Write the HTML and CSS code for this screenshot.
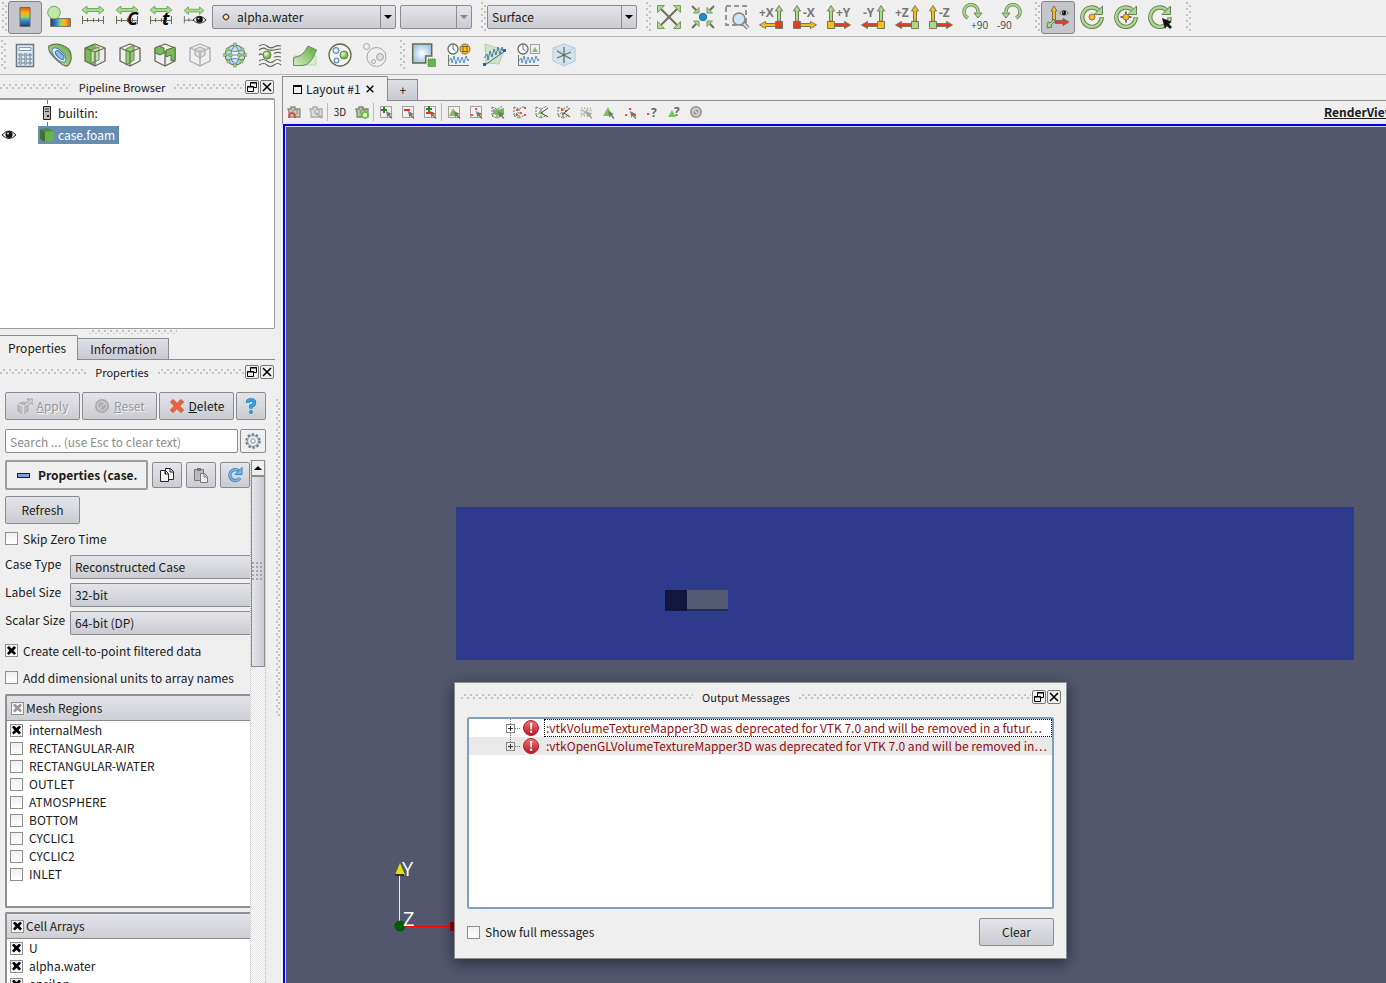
FILE: index.html
```
<!DOCTYPE html>
<html lang="en">
<head>
    <meta charset="UTF-8">
    <meta name="viewport" content="width=device-width, initial-scale=1.0">
    <title>ParaView</title>
    <link rel="stylesheet" href="styles.css">
</head>
<body>
    <!-- Shared icon shapes -->
    <svg class="defs" aria-hidden="true">
        <defs>
            <linearGradient id="rainbow" x1="0" y1="0" x2="0" y2="1">
                <stop offset="0" stop-color="#e8590c"/><stop offset=".3" stop-color="#fcb813"/><stop offset=".5" stop-color="#9ccf6a"/><stop offset=".7" stop-color="#1f8fd0"/><stop offset="1" stop-color="#3b2a8c"/>
            </linearGradient>
            <linearGradient id="rainbowH">
                <stop offset="0" stop-color="#3b2a8c"/><stop offset=".3" stop-color="#1f8fd0"/><stop offset=".5" stop-color="#9ccf6a"/><stop offset=".7" stop-color="#fcb813"/><stop offset="1" stop-color="#e8590c"/>
            </linearGradient>
            <radialGradient id="ball" cx=".35" cy=".35"><stop offset="0" stop-color="#f2faee"/><stop offset="1" stop-color="#74bb50"/></radialGradient>
            <radialGradient id="sky"><stop offset="0" stop-color="#fff"/><stop offset="1" stop-color="#a3cbea"/></radialGradient>
            <linearGradient id="leaf" x1="0" y1="1" x2="1" y2="0"><stop offset="0" stop-color="#d4ecc6"/><stop offset="1" stop-color="#5daa38"/></linearGradient>
            <linearGradient id="danger" x1="0" y1="0" x2="0" y2="1"><stop offset="0" stop-color="#f0786a"/><stop offset="1" stop-color="#b8142c"/></linearGradient>
            <symbol id="up" viewBox="0 0 24 24"><path d="M20 .5l3.500 5.500h-2v10h-3V6h-2z"/></symbol>
            <symbol id="side" viewBox="0 0 24 24"><path d="M.5 20l6-3.500v2h10v3h-10v2z"/></symbol>
            <symbol id="box" viewBox="0 0 24 24"><path d="M16.500 16.500h7v7h-7z"/></symbol>
            <symbol id="rule" viewBox="0 0 24 24">
                <path d="M1 5l5-4v2.500h12V1l5 4-5 4V6.500H6V9z" fill="#a5dc87" stroke="#79a765"/>
                <path d="M1 15.500h22M1.500 11v8M6.500 13v4M12.500 13v4M17.500 13v4M22.500 11v8" fill="none" stroke="#6d6d5c"/>
            </symbol>
            <symbol id="cube" viewBox="0 0 24 24"><path d="M12 1l10 4v13l-10 5-10-5V5zM2 5l10 4 10-4M12 9v14" fill="none" stroke-linejoin="round"/></symbol>
            <symbol id="spin" viewBox="0 0 24 24"><path d="M18.500 5A9.700 9.700 0 1 0 21.700 12" fill="none" stroke="#6e7a5c" stroke-width="4.300"/><path d="M18.500 5A9.700 9.700 0 1 0 21.600 12.500" fill="none" stroke="#a5dc87" stroke-width="2.500"/><path d="M22.500 1v8.500H14z" fill="#a5dc87" stroke="#6e7a5c"/></symbol>
            <symbol id="clock" viewBox="0 0 12 12"><circle cx="6" cy="6" r="5" fill="#fff" stroke="#6d6d5c" stroke-width="1.300"/><path d="M6 2v4l2.500 2" fill="none" stroke="#2b74b8"/></symbol>
            <symbol id="wave" viewBox="0 0 24 12"><path d="M1.500 0v10.500H22" fill="none" stroke="#777766"/><path d="M2 6l2-3 1 5 2-7 2 8 2-7 2 6 2-6 2 6 2-7 2 5 1-2" fill="none" stroke="#2c7fc4" stroke-width=".8"/></symbol>
            <symbol id="marquee" viewBox="0 0 14 14"><path d="M1.500 1.500h11v11h-11z" fill="none" stroke="#555" stroke-dasharray="1 1"/></symbol>
            <symbol id="pick" viewBox="0 0 14 14"><path d="M7 6l6 3-2.300.7L13.500 13l-1 1-3-3.300L8.500 13z" fill="#77776a"/></symbol>
            <symbol id="frustum" viewBox="0 0 14 14"><path d="M1 2l5 2 6-3M1 2v9l5 2M6 4v9l6-3M1 11l4-4" fill="none" stroke="#6c7764" stroke-dasharray="2 1"/></symbol>
            <symbol id="camera" viewBox="0 0 14 14"><path d="M1 4h3V2h4v2h5v8H2V7z" stroke-width="1.300"/><circle cx="8" cy="7" r="2.500" fill="none"/></symbol>
            <symbol id="float" viewBox="0 0 12 12"><path d="M4.500 1.500h6v5h-6zM4 2h7" fill="none" stroke="#000"/><path d="M1.500 5.500h6v5h-6zM1 6h7" fill="#eee" stroke="#000"/></symbol>
            <symbol id="close" viewBox="0 0 12 12"><path d="M2 2l8 8M10 2l-8 8" stroke="#000" stroke-width="1.600"/></symbol>
            <symbol id="eye" viewBox="0 0 16 12"><path d="M1 6q7-8 14 0-7 7-14 0z" fill="#eee" stroke="#222"/><circle cx="8" cy="5.500" r="3.500" fill="#111"/><circle cx="7" cy="4.500" r="1" fill="#ddd"/></symbol>
            <symbol id="error" viewBox="0 0 16 16"><circle cx="8" cy="8" r="7.500" fill="url(#danger)" stroke="#b3202c"/><path d="M7 3h2.300l-.5 6.500H7.500z" fill="#fff"/><circle cx="8.100" cy="11.800" r="1.200" fill="#fff"/></symbol>
        </defs>
    </svg>

    <!-- Colouring, representation and camera toolbar -->
    <header class="toolbar color-bar">
        <i class="grip"></i>
        <button class="tool active" aria-label="Color legend"><svg viewBox="0 0 24 24"><path d="M7 2.500h10v19H7z" fill="url(#rainbow)" stroke="#6b6b60"/></svg></button>
        <button class="tool" aria-label="Edit color map"><svg viewBox="0 0 24 24"><path d="M3.500 13.500h20v8h-20z" fill="url(#rainbowH)" stroke="#77776c"/><circle cx="7" cy="7.500" r="6.300" fill="#bfe8a8" stroke="#79a765"/></svg></button>
        <button class="tool" aria-label="Rescale to data range"><svg viewBox="0 0 24 24"><use href="#rule" width="24" height="24"/></svg></button>
        <button class="tool" aria-label="Rescale to custom range"><svg viewBox="0 0 24 24"><use href="#rule" width="24" height="24"/><text x="12" y="20" class="mark">C</text></svg></button>
        <button class="tool" aria-label="Rescale over time"><svg viewBox="0 0 24 24"><use href="#rule" width="24" height="24"/><text x="13" y="20" class="mark">t</text></svg></button>
        <button class="tool" aria-label="Rescale to visible range"><svg viewBox="0 0 24 24"><use href="#rule" width="22" height="24"/><path d="M10 10h14v10H10z" fill="#efefef"/><use href="#eye" x="9" y="9" width="15" height="12"/></svg></button>
        <div class="combo array">
            <i class="point"></i>
            <select aria-label="Color by"><option>alpha.water</option></select>
        </div>
        <div class="combo component off"><select aria-label="Component" disabled><option></option></select></div>
        <i class="grip spaced"></i>
        <div class="combo representation"><select aria-label="Representation"><option>Surface</option></select></div>
        <i class="grip spaced"></i>
        <button class="tool" aria-label="Reset camera"><svg viewBox="0 0 24 24"><path d="M4 4l16 16M20 4L4 20" stroke="#6e7358" stroke-width="2"/><path d="M.5.500h7l-7 7zM23.500.500h-7l7 7zM.5 23.500h7l-7-7zM23.500 23.500h-7l7-7z" fill="#a5dc87" stroke="#7a9a66"/></svg></button>
        <button class="tool" aria-label="Zoom to data"><svg viewBox="0 0 24 24"><path d="M1 1l5 5M23 1l-5 5M1 23l5-5M23 23l-5-5" stroke="#6e7358" stroke-width="2"/><path d="M8 8H2.500L8 2.500zM16 8h5.500L16 2.500zM8 16H2.500L8 21.500zM16 16h5.500L16 21.500z" fill="#a5dc87" stroke="#7a9a66"/><circle cx="12" cy="12" r="3.700" fill="#1b8ed0" stroke="#356f98"/></svg></button>
        <button class="tool" aria-label="Zoom to box"><svg viewBox="0 0 24 24"><path d="M1 1h20v19H1z" fill="none" stroke="#77776c" stroke-width="1.500" stroke-dasharray="5 3"/><path d="M18 18l5 5" stroke="#777" stroke-width="4"/><path d="M18 18l5 5" stroke="#cde3f4" stroke-width="2"/><circle cx="14" cy="14" r="6" fill="#cbe6f8" stroke="#858585" stroke-width="1.500"/></svg></button>
        <button class="tool" aria-label="+X"><svg class="axis" viewBox="0 0 24 24"><use href="#up" fill="#a5dc87"/><use href="#side" fill="#fdbb14"/><use href="#box" fill="#e23b26"/><text x="0" y="12">+X</text></svg></button>
        <button class="tool" aria-label="-X"><svg class="axis" viewBox="0 0 24 24"><g transform="matrix(-1 0 0 1 24 0)"><use href="#up" fill="#a5dc87"/><use href="#side" fill="#fdbb14"/><use href="#box" fill="#e23b26"/></g><text x="10" y="12">-X</text></svg></button>
        <button class="tool" aria-label="+Y"><svg class="axis" viewBox="0 0 24 24"><g transform="matrix(-1 0 0 1 24 0)"><use href="#up" fill="#a5dc87"/><use href="#side" fill="#e23b26"/><use href="#box" fill="#fdbb14"/></g><text x="9" y="12">+Y</text></svg></button>
        <button class="tool" aria-label="-Y"><svg class="axis" viewBox="0 0 24 24"><use href="#up" fill="#a5dc87"/><use href="#side" fill="#e23b26"/><use href="#box" fill="#fdbb14"/><text x="2" y="12">-Y</text></svg></button>
        <button class="tool" aria-label="+Z"><svg class="axis" viewBox="0 0 24 24"><use href="#up" fill="#fdbb14"/><use href="#side" fill="#e23b26"/><use href="#box" fill="#a5dc87"/><text x="0" y="12">+Z</text></svg></button>
        <button class="tool" aria-label="-Z"><svg class="axis" viewBox="0 0 24 24"><g transform="matrix(-1 0 0 1 24 0)"><use href="#up" fill="#fdbb14"/><use href="#side" fill="#e23b26"/><use href="#box" fill="#a5dc87"/></g><text x="10" y="12">-Z</text></svg></button>
        <button class="tool" aria-label="Rotate +90"><svg viewBox="0 0 24 24" class="turn"><path d="M5 13A7 7 0 1 1 15 7" fill="none" stroke="#6e7a5c" stroke-width="3.500"/><path d="M5 13A7 7 0 1 1 15 7" fill="none" stroke="#a5dc87" stroke-width="2"/><path d="M11 8h8l-4 5z" fill="#a5dc87" stroke="#6e7a5c"/><text x="8" y="24">+90</text></svg></button>
        <button class="tool" aria-label="Rotate -90"><svg viewBox="0 0 24 24" class="turn"><path d="M19 13A7 7 0 1 0 9 7" fill="none" stroke="#6e7a5c" stroke-width="3.500"/><path d="M19 13A7 7 0 1 0 9 7" fill="none" stroke="#a5dc87" stroke-width="2"/><path d="M13 8H5l4 5z" fill="#a5dc87" stroke="#6e7a5c"/><text x="0" y="24">-90</text></svg></button>
        <i class="grip spaced"></i>
        <button class="tool active" aria-label="Show orientation axes"><svg viewBox="0 0 24 24"><path d="M8 1l3 5H9.500v10h-3V6H5z" fill="#fdbb14" stroke="#77705c"/><path d="M9 15.500h8v-2l6 3.500-6 3.500v-2H9z" fill="#e23b26" stroke="#77705c"/><path d="M9 16l-4 4 1 2-5 1 1-6 2 1 4-4z" fill="#a5dc87" stroke="#6e7a5c"/><use href="#eye" x="13" y="4" width="10" height="8"/></svg></button>
        <button class="tool" aria-label="Show center"><svg viewBox="0 0 24 24"><use href="#spin" width="24" height="24"/><circle cx="12" cy="12" r="3" fill="#fdbb14" stroke="#8b7b45"/></svg></button>
        <button class="tool" aria-label="Reset center"><svg viewBox="0 0 24 24"><use href="#spin" width="24" height="24"/><path d="M12 6.500v11M6.500 12h11" stroke="#77705c" stroke-width="2"/><circle cx="12" cy="12" r="3" fill="#fdbb14" stroke="#8b7b45"/></svg></button>
        <button class="tool" aria-label="Pick center"><svg viewBox="0 0 24 24"><use href="#spin" width="24" height="24"/><path d="M14 13l10 4-3.500 1.500L24 22l-2 2-3.500-3.500L17 24z" fill="#111"/></svg></button>
        <i class="grip spaced"></i>
    </header>

    <!-- Filters toolbar -->
    <div class="toolbar filter-bar">
        <i class="grip"></i>
        <button class="tool" aria-label="Calculator"><svg viewBox="0 0 24 24"><path d="M3.500 1.500h17v22h-17z" fill="#dcecf8" stroke="#6d7780" stroke-width="1.500"/><path d="M6 4.500h12v3H6z" fill="#fff" stroke="#779cb8"/><path d="M6 11h3v2H6zm5 0h3v2h-3zm5 0h2v2h-2zM6 15h3v2H6zm5 0h3v2h-3zm5 0h2v2h-2zM6 19h3v2H6zm5 0h3v2h-3zm5 0h2v2h-2z" fill="#fff" stroke="#64788a"/></svg></button>
        <button class="tool" aria-label="Contour"><svg viewBox="0 0 24 24"><path d="M1 3C8-1 22 2 23 12c1 6-2 11-5 11S-2 10 1 3z" fill="url(#leaf)" stroke="#677750" stroke-width="1.300"/><ellipse cx="11" cy="12" rx="4.500" ry="9" transform="rotate(-43 11 12)" fill="#d9edf8" stroke="#5684a8"/><ellipse cx="11.500" cy="12.500" rx="2.500" ry="5.500" transform="rotate(-43 11 12)" fill="#8abde5" stroke="#426f9a"/></svg></button>
        <button class="tool" aria-label="Clip"><svg viewBox="0 0 24 24"><path d="M2 5l8-4 4 2-3 6v14l-9-5z" fill="#77bb55"/><path d="M8 7l8-3v13l-8 3z" fill="#bce2a8" stroke="#6e8060"/><use href="#cube" width="24" height="24" stroke="#68684e" stroke-width="1.300"/></svg></button>
        <button class="tool" aria-label="Slice"><svg viewBox="0 0 24 24"><path d="M8 6l8-4v15l-8 5z" fill="#92cc74" stroke="#5c9340"/><use href="#cube" width="24" height="24" stroke="#68684e" stroke-width="1.300"/></svg></button>
        <button class="tool" aria-label="Threshold"><svg viewBox="0 0 24 24"><use href="#cube" width="24" height="24" stroke="#68684e" stroke-width="1.300"/><path d="M2 5l4-2 5 2v5l-4 2-5-2zM13 7l9-3v13l-4 1v-6l-5 2z" fill="#79bd5a" stroke="#5b703f"/></svg></button>
        <button class="tool" aria-label="Extract subset"><svg viewBox="0 0 24 24"><path d="M7 6l5-2 5 2v6l-5 3-5-3z" fill="#ddd" stroke="#aaa"/><use href="#cube" width="24" height="24" stroke="#aaa" stroke-width="1.300"/></svg></button>
        <button class="tool" aria-label="Glyph"><svg viewBox="0 0 24 24"><circle cx="12" cy="12" r="10" fill="url(#sky)" stroke="#68684e"/><path d="M2 12h20M4 7q8 3 16 0M4 17q8-3 16 0M12 2q-9 10 0 20M12 2q9 10 0 20" fill="none" stroke="#65859c"/><path d="M10.500 0h3v3h-3zM10.500 21h3v3h-3zM.5 10.500h3v3h-3zM20.500 10.500h3v3h-3zM6 10.500h3v3H6zM15 10.500h3v3h-3zM3 5h3v3H3zM18 5h3v3h-3zM4 17h3v3H4zM17 17h3v3h-3z" fill="#99ce77" stroke="#6d9150" stroke-width=".5"/></svg></button>
        <button class="tool" aria-label="Stream tracer"><svg viewBox="0 0 24 24"><path d="M1 3q5-3 8 0t7 1 7-1M1 7q4-3 7-1 4 2 8 1t7-1M16 10.500q4-2 7-.5M16 14q3-1 7 0M1 12q2-2 4 0M1 18q4-3 8 0t7 0 7 0M1 22q5-3 8 0t7 0 7 0" fill="none" stroke="#66664e" stroke-width="1.200"/><circle cx="9" cy="12" r="4" fill="url(#ball)" stroke="#57823f"/></svg></button>
        <button class="tool" aria-label="Warp by vector"><svg viewBox="0 0 24 24"><path d="M1 13h22v9H1z" fill="#d7edcb" stroke="#bcd9ad"/><path d="M.5 14.500Q10 14 15 3l8.500 4Q18 22 10 22.500H.5z" fill="url(#leaf)" stroke="#6d8a5a"/></svg></button>
        <button class="tool" aria-label="Group datasets"><svg viewBox="0 0 24 24"><circle cx="12" cy="12" r="11" fill="#f4f4f0" stroke="#68684e" stroke-width="1.300"/><circle cx="8" cy="7.500" r="3" fill="url(#sky)" stroke="#477da5"/><circle cx="16" cy="12" r="4" fill="url(#ball)" stroke="#57823f"/><circle cx="8.500" cy="17.500" r="2.500" fill="url(#sky)" stroke="#477da5"/></svg></button>
        <button class="tool" aria-label="Extract level"><svg viewBox="0 0 24 24" fill="#eee" stroke="#a5a5a5"><circle cx="13.500" cy="14" r="9.500"/><circle cx="3.500" cy="3.500" r="3"/><circle cx="17" cy="14" r="3.500" fill="#ddd"/><circle cx="10.500" cy="18.500" r="2"/></svg></button>
        <i class="grip spaced"></i>
        <button class="tool" aria-label="Extract selection"><svg viewBox="0 0 24 24"><path d="M.7 1h19v12h-6v7h-13z" fill="url(#sky)" stroke="#68684e" stroke-width="1.500"/><path d="M16 16h7.500v7.500H16z" fill="#65b64c" stroke="#48752f" stroke-dasharray="1 1"/></svg></button>
        <button class="tool" aria-label="Plot global variables"><svg viewBox="0 0 24 24"><use href="#clock" width="12" height="12"/><circle cx="18" cy="6" r="5" fill="#fcc02a" stroke="#6d6d5c"/><path d="M15 3.500h6M15 8.500h6M16 4v4M20 4v4" stroke="#806213"/><use href="#wave" y="12" width="24" height="12"/></svg></button>
        <button class="tool" aria-label="Plot over line"><svg viewBox="0 0 24 24"><path d="M3 1l19 6-5 14L4 20z" fill="#cfe3c6" stroke="#b4cda7"/><path d="M3 22L23 8" stroke="#476a80"/><path d="M2 15l3-4 1 6 2-9 2 6 2-8 2 6 2-8 2 7 2-7 1 4" fill="none" stroke="#236aa6" stroke-width=".8"/><path d="M1 20h3v3H1zM21 6h3v3h-3z" fill="#1d64b3"/></svg></button>
        <button class="tool" aria-label="Plot selection over time"><svg viewBox="0 0 24 24"><use href="#clock" width="12" height="12"/><path d="M13.500 1.500h9v9h-9z" fill="none" stroke="#555" stroke-dasharray="1 1"/><path d="M18 4l3 5h-6z" fill="#81c35e"/><use href="#wave" y="12" width="24" height="12"/></svg></button>
        <button class="tool" aria-label="Probe location"><svg viewBox="0 0 24 24"><path d="M12 1l11 4v13l-11 5-11-5V5z" fill="#d3e4ef" stroke="#b1cada"/><path d="M1 5l11 4 11-4M12 9v14" fill="none" stroke="#b9d0df"/><path d="M12 4v16M5 8l14 8M5 15l14-6" stroke="#6b6f65" stroke-width="1.300"/></svg></button>
    </div>

    <div class="workspace">
        <aside class="docks">
            <!-- Pipeline browser -->
            <section class="dock">
                <div class="dock-title"><i class="ridge"></i><h2>Pipeline Browser</h2><i class="ridge"></i>
                    <button aria-label="Float"><svg viewBox="0 0 12 12"><use href="#float"/></svg></button>
                    <button aria-label="Close"><svg viewBox="0 0 12 12"><use href="#close"/></svg></button>
                </div>
                <ul class="pipeline">
                    <li><span class="vis"></span><span class="node"><svg viewBox="0 0 16 16"><path d="M4.500 1.500h7v13h-7z" fill="#bbb" stroke="#222"/><path d="M6 4h4M6 6.500h4" stroke="#333"/><path d="M8 10h2v2H8z" fill="#222"/></svg>builtin:</span></li>
                    <li><span class="vis"><svg viewBox="0 0 16 12"><use href="#eye"/></svg></span><span class="node selected"><svg viewBox="0 0 16 16"><path d="M1 2l5 3v10l-5-3z" fill="#3f7330"/><path d="M1 2l8-1 6 3-9 1z" fill="#568747"/><path d="M6 5l9-1v10l-9 1z" fill="#6ab04c"/></svg>case.foam</span></li>
                </ul>
            </section>
            <i class="ridge handle"></i>

            <!-- Properties -->
            <nav class="tabs side-tabs">
                <button class="tab current">Properties</button>
                <button class="tab">Information</button>
            </nav>
            <section class="dock properties">
                <div class="dock-title"><i class="ridge"></i><h2>Properties</h2><i class="ridge"></i>
                    <button aria-label="Float"><svg viewBox="0 0 12 12"><use href="#float"/></svg></button>
                    <button aria-label="Close"><svg viewBox="0 0 12 12"><use href="#close"/></svg></button>
                </div>
                <div class="actions">
                    <button class="push" disabled><svg viewBox="0 0 16 16"><path d="M1 6l5-2 5 2v7l-5 3-5-3z" fill="#bbb" stroke="#aaa"/><path d="M1 6l5 2 5-2M6 8v8" fill="none" stroke="#eee"/><path d="M7 6l5-4-2-1h6v6l-2-2-4 4z" fill="#ccc" stroke="#aaa"/></svg><span><u>A</u>pply</span></button>
                    <button class="push" disabled><svg viewBox="0 0 16 16"><circle cx="8" cy="8" r="7" fill="#aaa"/><circle cx="8" cy="8" r="4.500" fill="none" stroke="#ccc" stroke-width="1.500"/><path d="M5 11l6-6" stroke="#ccc" stroke-width="1.500"/></svg><span><u>R</u>eset</span></button>
                    <button class="push"><svg viewBox="0 0 16 16"><path d="M4 1.500l4 4 4-4 2.500 2.500-4 4 4 4-2.500 2.500-4-4-4 4L1.500 12l4-4-4-4z" fill="#f4623d" stroke="#c54d31"/></svg><span><u>D</u>elete</span></button>
                    <button class="push small" aria-label="Help"><svg viewBox="0 0 16 16"><path d="M4.500 5Q4.500 2 8 2t3.500 3Q11.500 7 8 8v2.500" fill="none" stroke="#216ca3" stroke-width="3.500"/><path d="M4.500 5Q4.500 2 8 2t3.500 3Q11.500 7 8 8v2.500" fill="none" stroke="#36a1e4" stroke-width="2.500"/><circle cx="8" cy="14" r="1.700" fill="#36a1e4" stroke="#216ca3" stroke-width=".5"/></svg></button>
                </div>
                <div class="search">
                    <input type="text" placeholder="Search ... (use Esc to clear text)" aria-label="Search">
                    <button class="push" aria-label="Advanced"><svg viewBox="0 0 16 16"><circle cx="8" cy="8" r="6.500" fill="none" stroke="#71818d" stroke-width="2.500" stroke-dasharray="2.400 1.680"/><circle cx="8" cy="8" r="5.500" fill="#e8eef2" stroke="#8394a0"/><circle cx="8" cy="8" r="2.200" fill="#fafafa" stroke="#8394a0"/></svg></button>
                </div>
                <div class="scroll-area">
                    <div class="form">
                        <div class="group-bar">
                            <button class="fold"><i class="dash"></i>Properties (case.</button>
                            <button class="push" aria-label="Copy"><svg viewBox="0 0 16 16" fill="#f5f5f5" stroke="#222"><path d="M6.500 1.500h5l3 3v8h-8zM11 2v3h3"/><path d="M1.500 3.500h5l3 3v8h-8zM6 4v3h3"/></svg></button>
                            <button class="push" aria-label="Paste"><svg viewBox="0 0 16 16"><path d="M1.500 2.500h9v11h-9z" fill="#bbb" stroke="#777"/><path d="M4 1h4v3H4z" fill="#777"/><path d="M7.500 6.500h4l3 3v6h-7zM11 7v3h3" fill="#eee" stroke="#777"/></svg></button>
                            <button class="push" aria-label="Restore defaults"><svg viewBox="0 0 16 16"><path d="M12 4A5.500 5.500 0 1 0 13 11" fill="none" stroke="#3d84c0" stroke-width="3.300"/><path d="M12 4A5.500 5.500 0 1 0 13 11" fill="none" stroke="#79b5e4" stroke-width="1.700"/><path d="M15 .5v7H8z" fill="#79b5e4" stroke="#3d84c0"/></svg></button>
                        </div>
                        <button class="push refresh">Refresh</button>
                        <label class="check first"><input type="checkbox">Skip Zero Time</label>
                        <div class="field"><label for="case-type">Case Type</label><select id="case-type"><option>Reconstructed Case</option></select></div>
                        <div class="field"><label for="label-size">Label Size</label><select id="label-size"><option>32-bit</option></select></div>
                        <div class="field"><label for="scalar-size">Scalar Size</label><select id="scalar-size"><option>64-bit (DP)</option></select></div>
                        <label class="check"><input type="checkbox" checked>Create cell-to-point filtered data</label>
                        <label class="check"><input type="checkbox">Add dimensional units to array names</label>
                        <fieldset class="list">
                            <label class="head"><input type="checkbox" class="partial" checked>Mesh Regions</label>
                            <label><input type="checkbox" checked>internalMesh</label>
                            <label><input type="checkbox">RECTANGULAR-AIR</label>
                            <label><input type="checkbox">RECTANGULAR-WATER</label>
                            <label><input type="checkbox">OUTLET</label>
                            <label><input type="checkbox">ATMOSPHERE</label>
                            <label><input type="checkbox">BOTTOM</label>
                            <label><input type="checkbox">CYCLIC1</label>
                            <label><input type="checkbox">CYCLIC2</label>
                            <label><input type="checkbox">INLET</label>
                        </fieldset>
                        <fieldset class="list">
                            <label class="head"><input type="checkbox" checked>Cell Arrays</label>
                            <label><input type="checkbox" checked>U</label>
                            <label><input type="checkbox" checked>alpha.water</label>
                            <label><input type="checkbox" checked>epsilon</label>
                        </fieldset>
                    </div>
                    <div class="scrollbar">
                        <button aria-label="Scroll up"></button>
                        <div class="thumb"><i></i></div>
                    </div>
                </div>
            </section>
        </aside>
        <div class="splitter"><i></i></div>

        <!-- Layout with the render view -->
        <main class="layout">
            <nav class="tabs">
                <button class="tab current"><i class="window"></i>Layout #1<svg viewBox="0 0 12 12"><use href="#close"/></svg></button>
                <button class="tab">+</button>
            </nav>
            <div class="view-bar">
                <button aria-label="Undo camera"><svg viewBox="0 0 14 14"><use href="#camera" fill="#c9c9c0" stroke="#8b8b80"/><path d="M2 13q0-5 3-5t3 5" fill="none" stroke="#df4b35" stroke-width="2"/></svg></button>
                <button aria-label="Redo camera"><svg viewBox="0 0 14 14"><use href="#camera" fill="#ddd" stroke="#aaa"/><path d="M7 8l6 5" stroke="#aaa" stroke-width="2"/></svg></button>
                <i class="sep"></i>
                <button>3D</button>
                <button aria-label="Adjust camera"><svg viewBox="0 0 14 14"><use href="#camera" fill="#b5c3a5" stroke="#7d8772"/><circle cx="10" cy="10" r="3" fill="#d9f4cc" stroke="#65ba41" stroke-width="1.500"/></svg></button>
                <i class="sep"></i>
                <button aria-label="Add selection"><svg viewBox="0 0 14 14"><use href="#marquee"/><use href="#pick"/><path d="M5 2v6M2 5h6" stroke="#2c8221" stroke-width="2"/></svg></button>
                <button aria-label="Subtract selection"><svg viewBox="0 0 14 14"><use href="#marquee"/><use href="#pick"/><path d="M3 5h6" stroke="#e23023" stroke-width="2"/></svg></button>
                <button aria-label="Toggle selection"><svg viewBox="0 0 14 14"><use href="#marquee"/><use href="#pick"/><path d="M6 1v6M3 4h6" stroke="#2c8221" stroke-width="2"/><path d="M3 8h7" stroke="#e23023" stroke-width="2"/></svg></button>
                <i class="sep"></i>
                <button aria-label="Select cells on"><svg viewBox="0 0 14 14"><use href="#marquee"/><path d="M6 3l5 8H2z" fill="#7dc35c"/><use href="#pick"/></svg></button>
                <button aria-label="Select points on"><svg viewBox="0 0 14 14"><use href="#marquee"/><path d="M6 3h2v2H6zM2 9h2v2H2zM10 8h2v2h-2z" fill="#ef5138"/><use href="#pick"/></svg></button>
                <button aria-label="Select cells through"><svg viewBox="0 0 14 14"><use href="#frustum"/><path d="M2 4l4 1 7-2v7l-4 1-7-2z" fill="#75b957"/><use href="#pick"/></svg></button>
                <button aria-label="Select points through"><svg viewBox="0 0 14 14"><use href="#frustum"/><path d="M3 4h2v2H3zM7 7h2v2H7zM11 2h2v2h-2zM11 9h2v2h-2zM3 9h2v2H3z" fill="#ef5138"/></svg></button>
                <button aria-label="Select cells polygon"><svg viewBox="0 0 14 14"><use href="#frustum"/><path d="M5 5l4 4H3z" fill="#7dc35c"/><path d="M13 3L6 8l7 4" fill="none" stroke="#405238"/></svg></button>
                <button aria-label="Select points polygon"><svg viewBox="0 0 14 14"><use href="#frustum"/><path d="M4 4h2v2H4zM8 5h2v2H8zM5 8h2v2H5z" fill="#ef5138"/><path d="M13 3L7 8l6 4" fill="none" stroke="#405238"/></svg></button>
                <button aria-label="Select block"><svg viewBox="0 0 14 14" opacity=".65"><path d="M2 3h10v8H2z" fill="#d6e3cf" stroke="#555" stroke-dasharray="1 2"/><path d="M3 5l7 5M9 4L4 10" stroke="#6f8167"/><use href="#pick"/></svg></button>
                <button aria-label="Interactive cells"><svg viewBox="0 0 14 14"><path d="M7 2l5 9H2z" fill="#7dc35c"/><use href="#pick"/></svg></button>
                <button aria-label="Interactive points"><svg viewBox="0 0 14 14"><path d="M6 3h2v2H6zM2 9h2v2H2zM11 9h2v2h-2z" fill="#ef5138"/><use href="#pick"/></svg></button>
                <button aria-label="Hover points"><svg viewBox="0 0 14 14"><path d="M2 8h2v2H2z" fill="#ef5138"/><text x="6" y="12">?</text></svg></button>
                <button aria-label="Hover cells"><svg viewBox="0 0 14 14"><path d="M5 5l4 7H1z" fill="#7dc35c"/><text x="7" y="11">?</text></svg></button>
                <button aria-label="Clear selection"><svg viewBox="0 0 14 14"><circle cx="7" cy="7" r="6" fill="#999"/><circle cx="7" cy="7" r="3.500" fill="none" stroke="#ddd" stroke-width="1.300"/><path d="M4.500 4.500l5 5" stroke="#ddd" stroke-width="1.300"/></svg></button>
                <span class="view-name">RenderView1</span>
            </div>
            <div class="viewport">
                <svg class="scene" width="1100" height="857" viewBox="0 0 1100 857">
                    <path d="M169 380h898v153H169z" fill="#2e3a8c"/>
                    <path d="M378 463h22v21h-22z" fill="#12163f"/>
                    <path d="M400 463h41v19h-41z" fill="#525970"/>
                    <path d="M400 482h41v2h-41z" fill="#20285f"/>
                    <path d="M112.500 794V748" stroke="#ff6"/>
                    <path d="M113 736l5 12h-10z" fill="#e0e000"/>
                    <path d="M108 747h9v2h-9z" fill="#333300"/>
                    <path d="M118 799.500h48" stroke="#f00"/>
                    <path d="M163 795h4v9h-4z" fill="#900"/>
                    <circle cx="113" cy="799" r="5.500" fill="#005c00"/>
                    <text x="115" y="749">Y</text>
                    <text x="116" y="799">Z</text>
                </svg>

                <section class="messages" role="dialog" aria-label="Output Messages">
                    <div class="dock-title"><i class="ridge"></i><h2>Output Messages</h2><i class="ridge"></i>
                        <button aria-label="Float"><svg viewBox="0 0 12 12"><use href="#float"/></svg></button>
                        <button aria-label="Close"><svg viewBox="0 0 12 12"><use href="#close"/></svg></button>
                    </div>
                    <ul class="log">
                        <li><i class="expand"></i><svg viewBox="0 0 16 16"><use href="#error"/></svg><span class="focus">:vtkVolumeTextureMapper3D was deprecated for VTK 7.0 and will be removed in a futur⋯</span></li>
                        <li><i class="expand"></i><svg viewBox="0 0 16 16"><use href="#error"/></svg><span>:vtkOpenGLVolumeTextureMapper3D was deprecated for VTK 7.0 and will be removed in⋯</span></li>
                    </ul>
                    <div class="footer">
                        <label class="check"><input type="checkbox">Show full messages</label>
                        <button class="push">Clear</button>
                    </div>
                </section>
            </div>
        </main>
    </div>
</body>
</html>
```
FILE: styles.css
```
* {
    box-sizing: border-box;
}

body {
    margin: 0;
    height: 100vh;
    overflow: hidden;
    display: flex;
    flex-direction: column;
    background: #efefef;
    color: #1a1a1a;
    font: 12px/18px "Noto Sans CJK SC", sans-serif;
}

button, input, select {
    font: inherit;
    color: inherit;
    margin: 0;
}

button {
    padding: 0;
    border: 0;
    background: none;
}

svg {
    display: block;
    flex: none;
}

ul {
    list-style: none;
    margin: 0;
    padding: 0;
}

.defs {
    position: absolute;
    width: 0;
    height: 0;
}

/* Toolbars */
.toolbar {
    display: flex;
    align-items: center;
    flex: none;
    height: 37px;
    padding: 0 2px 2px;
    border-bottom: 1px solid #b4b4b4;
}

.filter-bar {
    height: 38px;
    padding: 0 1px 1px;
}

.grip {
    flex: none;
    width: 6px;
    height: 30px;
    background:
        radial-gradient(circle at 1px 1px, #c2c2c2 1px, transparent 1px) 0 0 / 6px 6px,
        radial-gradient(circle at 4px 4px, #c2c2c2 1px, transparent 1px) 0 0 / 6px 6px;
}

.grip.spaced {
    margin-left: 9px;
}

.tool {
    flex: none;
    width: 34px;
    height: 33px;
    display: grid;
    place-items: center;
    border-radius: 3px;
}

.filter-bar .tool {
    width: 35px;
}

.filter-bar .grip.spaced {
    margin-left: 8px;
}

.tool svg {
    width: 24px;
    height: 24px;
    overflow: visible;
}

.tool.active {
    border: 1px solid #858588;
    background: #c5c6cb;
}

.mark {
    font: italic bold 18px "Open Sans", sans-serif;
}

.axis use {
    stroke: #77775f;
}

.axis text {
    font: bold 12px "Open Sans", sans-serif;
    fill: #777;
}

.turn text {
    font: 10px "Open Sans", sans-serif;
    fill: #444;
}

/* Drop-downs */
select, .push {
    border: 1px solid #8b8b8f;
    border-radius: 2px;
    background: linear-gradient(#e4e5ea, #cbccd2);
}

select {
    appearance: none;
    padding: 0 4px;
    height: 24px;
    opacity: 1;
}

.combo {
    position: relative;
    flex: none;
}

.combo select {
    width: 100%;
    display: block;
}

.combo::before {
    content: "";
    position: absolute;
    top: 1px;
    bottom: 1px;
    right: 15px;
    border-left: 1px solid #8b8b8f;
}

.combo::after {
    content: "";
    position: absolute;
    top: 10px;
    right: 4px;
    border: 4px solid transparent;
    border-top-color: #000;
    border-bottom: 0;
}

.combo.off::after {
    border-top-color: #888;
}

.array {
    width: 184px;
    margin-right: 4px;
}

.array select {
    padding-left: 24px;
}

.component {
    width: 72px;
}

.representation {
    width: 150px;
}

.point {
    position: absolute;
    top: 9px;
    left: 11px;
    width: 6px;
    height: 6px;
    border: 1px solid #332211;
    border-radius: 2px;
    background: #ffdca8;
    transform: rotate(45deg);
}

/* Main area */
.workspace {
    flex: 1;
    min-height: 0;
    display: flex;
}

.docks {
    width: 275px;
    flex: none;
    display: flex;
    flex-direction: column;
}

.dock-title {
    display: flex;
    align-items: center;
    gap: 1px;
    height: 23px;
    padding-right: 1px;
}

.dock-title h2 {
    margin: 0 8px;
    font-size: 11px;
    font-weight: 400;
}

.dock-title button {
    width: 14px;
    height: 14px;
    display: grid;
    place-items: center;
    border: 1px solid #777;
    border-radius: 2px;
}

.dock-title button svg {
    width: 12px;
    height: 12px;
}

.ridge {
    flex: 1;
    height: 6px;
    background:
        radial-gradient(circle at 1px 4px, #c2c2c2 1px, transparent 1px) 0 0 / 6px 6px,
        radial-gradient(circle at 4px 1px, #c2c2c2 1px, transparent 1px) 0 0 / 6px 6px;
}

.pipeline {
    height: 231px;
    padding-top: 2px;
    border: 2px solid #9a9a9a;
    border-width: 2px 1px 1px 0;
    border-radius: 0 2px 2px 0;
    background: #fff;
}

.pipeline li {
    display: flex;
    align-items: center;
    height: 22px;
}

.vis {
    width: 38px;
    padding-left: 1px;
}

.vis svg {
    width: 16px;
    height: 12px;
}

.node {
    position: relative;
    display: flex;
    align-items: center;
    gap: 3px;
    padding: 0 4px 0 1px;
}

.node::before {
    content: "";
    position: absolute;
    top: -4px;
    left: 9px;
    height: 4px;
    border-left: 1px solid #777;
}

.node svg {
    width: 16px;
    height: 16px;
}

.node.selected {
    background: #678db2;
    color: #fff;
}

.handle {
    flex: none;
    width: 88px;
    height: 4px;
    margin: 1px 0 1px 89px;
}

/* Tabs */
.tabs {
    display: flex;
    align-items: flex-end;
    height: 25px;
    flex: none;
    background: linear-gradient(#8b8b8b, #8b8b8b) bottom / 100% 1px no-repeat;
}

.tab {
    height: 22px;
    padding: 0 11px 0 12px;
    border: 1px solid #8b8b8b;
    border-left: 0;
    background: linear-gradient(#dfe0e6, #c9cad1);
}

.tab.current {
    height: 25px;
    border-bottom: 0;
    border-radius: 0 2px 0 0;
    background: #efefef;
}

.side-tabs .current {
    padding: 0 11px 0 8px;
}

.layout .current {
    display: flex;
    align-items: center;
    gap: 4px;
    padding: 0 12px 0 10px;
    border-left: 1px solid #8b8b8b;
}

.tab svg {
    width: 10px;
    height: 10px;
}

.window {
    width: 9px;
    height: 9px;
    border: 1px solid #000;
    border-top-width: 2px;
}

/* Properties panel */
.properties {
    flex: 1;
    min-height: 0;
    display: flex;
    flex-direction: column;
}

.properties .dock-title {
    flex: none;
}

.actions, .search {
    display: flex;
    flex: none;
    gap: 2px;
    padding: 0 9px 0 5px;
}

.actions {
    padding-top: 9px;
}

.push {
    display: flex;
    align-items: center;
    justify-content: center;
    gap: 4px;
    height: 28px;
}

.actions .push {
    flex: 1;
}

.actions .small {
    flex: 0 0 30px;
}

.push svg {
    width: 16px;
    height: 16px;
}

.push:disabled {
    color: #97979b;
    text-shadow: 1px 1px #f4f4f4;
}

.search {
    padding-top: 9px;
}

.search input {
    flex: 1;
    min-width: 0;
    height: 24px;
    padding: 0 4px;
    border: 1px solid #8b8b8f;
    border-radius: 2px;
    background: #fff;
}

.search input::placeholder {
    color: #8c8c8c;
}

.search .push {
    width: 26px;
    height: 24px;
    background: #efefef;
}

.scroll-area {
    flex: 1;
    min-height: 0;
    display: flex;
    margin: 7px 9px 0 5px;
    overflow: hidden;
}

.form {
    flex: 1;
    min-width: 0;
    overflow: hidden;
}

.group-bar {
    display: flex;
    align-items: center;
    gap: 4px;
}

.group-bar .push {
    width: 30px;
    height: 26px;
    flex: none;
}

.fold {
    flex: 1;
    min-width: 0;
    display: flex;
    align-items: center;
    gap: 8px;
    height: 30px;
    padding-left: 10px;
    border: 2px solid #9c9c9c;
    border-radius: 2px;
    font-weight: 700;
    white-space: nowrap;
}

.dash {
    width: 13px;
    height: 5px;
    border: 1px solid #141d42;
    background: #829be3;
}

.refresh {
    width: 75px;
    margin-top: 6px;
}

.check {
    display: flex;
    align-items: center;
    gap: 5px;
    height: 27px;
    white-space: nowrap;
}

.check.first {
    margin: 1px 0;
}

input[type="checkbox"] {
    appearance: none;
    flex: none;
    width: 13px;
    height: 13px;
    display: grid;
    place-items: center;
    border: 1px solid #8f8f8f;
    background: linear-gradient(#efefef, #fff);
}

input[type="checkbox"]:checked::before {
    content: "";
    width: 9px;
    height: 9px;
    background: #000;
    clip-path: polygon(0 20%, 20% 0, 50% 27%, 80% 0, 100% 20%, 73% 50%, 100% 80%, 80% 100%, 50% 73%, 20% 100%, 0 80%, 27% 50%);
}

input.partial:checked::before {
    background: #999;
}

.field {
    display: flex;
    height: 28px;
    padding-top: 2px;
}

.field label {
    width: 65px;
    flex: none;
}

.field select {
    flex: 1;
    min-width: 0;
    border-right: 0;
    border-radius: 2px 0 0 2px;
}

.list {
    min-width: 0;
    height: 214px;
    margin: 0 0 4px;
    padding: 0;
    border: 2px solid #909090;
    border-right: 0;
    border-radius: 2px 0 0 2px;
    background: #fff;
}

.check + .list {
    margin-top: 3px;
}

.list label {
    display: flex;
    align-items: center;
    gap: 6px;
    height: 18px;
    padding-left: 3px;
}

.list .head {
    gap: 2px;
    height: 25px;
    padding-left: 4px;
    border-bottom: 1px solid #8b8b8b;
    background: linear-gradient(#e2e3e8, #cfd0d6);
}

.scrollbar {
    flex: none;
    width: 16px;
    border: 1px dotted #c2c2c2;
    border-width: 0 1px;
    background: repeating-conic-gradient(#e9e9e9 0 25%, #f8f8f8 0 50%) 0 0 / 2px 2px;
}

.scrollbar button {
    display: grid;
    place-items: center;
    width: 100%;
    height: 16px;
    border: 1px solid #8b8b8f;
    background: #efefef;
}

.scrollbar button::before {
    content: "";
    border: 4px solid transparent;
    border-bottom-color: #000;
    border-top: 0;
}

.thumb {
    display: grid;
    place-items: center;
    height: 191px;
    border: 1px solid #8b8b8f;
    background: linear-gradient(90deg, #e4e5ea, #cbccd2);
}

.thumb i {
    width: 12px;
    height: 20px;
    background: radial-gradient(circle at 1px 1px, #a5a5aa 1px, transparent 1px) 0 0 / 4px 4px;
}

.splitter {
    width: 7px;
    flex: none;
    padding: 324px 2px 0 1px;
}

.splitter i {
    display: block;
    width: 4px;
    height: 318px;
    background:
        radial-gradient(circle at 1px 1px, #c2c2c2 1px, transparent 1px) 0 0 / 6px 6px,
        radial-gradient(circle at 3px 4px, #c2c2c2 1px, transparent 1px) 0 0 / 6px 6px;
}

/* Render view */
.layout {
    flex: 1;
    min-width: 0;
    display: flex;
    flex-direction: column;
    padding-top: 1px;
}

.view-bar {
    display: flex;
    align-items: center;
    flex: none;
    height: 23px;
    padding-bottom: 2px;
    border-left: 1px solid #8b8b8b;
    overflow: hidden;
}

.view-bar button {
    flex: none;
    width: 22px;
    height: 20px;
    display: grid;
    place-items: center;
    font-size: 10px;
}

.view-bar svg {
    width: 14px;
    height: 14px;
    overflow: visible;
}

.view-bar text {
    font: bold 12px "Open Sans", sans-serif;
    fill: #6a6a60;
}

.sep {
    flex: none;
    width: 1px;
    height: 18px;
    margin-right: 1px;
    background: #b9b9b9;
}

.view-name {
    width: 62px;
    margin-left: auto;
    flex: none;
    overflow: hidden;
    font-weight: 700;
    text-decoration: underline;
}

.viewport {
    position: relative;
    flex: 1;
    min-height: 0;
    margin-left: 1px;
    overflow: hidden;
    border: 2px solid #0000f0;
    border-width: 2px 0 0 2px;
    background: #52576e;
    box-shadow: inset 1px 1px #d5d7e5;
}

.scene {
    position: absolute;
    top: 1px;
    left: 2px;
}

.scene text {
    font: 20px "Open Sans", sans-serif;
    fill: #fff;
}

/* Output messages window */
.messages {
    position: absolute;
    left: 169px;
    top: 556px;
    width: 613px;
    padding: 2px 4px 12px 6px;
    border: 1px solid #8d8d8d;
    background: #efefef;
    box-shadow: 0 4px 14px rgba(0, 0, 0, 0.5);
}

.log {
    height: 192px;
    margin: 9px 8px 0 6px;
    border: 2px solid #7f9fbe;
    border-radius: 2px;
    background: #fff;
    overflow: hidden;
}

.log li {
    display: flex;
    align-items: center;
    height: 18px;
    padding-left: 37px;
    color: #8f1010;
}

.log li:nth-child(even) {
    background: #e9e9e9;
}

.log svg {
    width: 16px;
    height: 16px;
    margin: 0 5px 0 8px;
}

.log span {
    flex: 1;
    min-width: 0;
    height: 18px;
    padding-left: 1px;
    border: 1px dotted transparent;
    line-height: 16px;
    white-space: nowrap;
}

.log .focus {
    border-color: #000;
}

.expand {
    position: relative;
    flex: none;
    width: 9px;
    height: 9px;
    border: 1px solid #888;
    background:
        linear-gradient(#333, #333) center / 5px 1px no-repeat,
        linear-gradient(#333, #333) center / 1px 5px no-repeat;
}

/* Dotted branch lines of the tree */
.expand::before {
    content: "";
    position: absolute;
    bottom: 8px;
    left: 3px;
    height: 9px;
    border-left: 1px dotted #777;
}

.expand::after {
    content: "";
    position: absolute;
    top: 3px;
    left: 8px;
    width: 5px;
    border-top: 1px dotted #777;
}

.footer {
    display: flex;
    align-items: center;
    justify-content: space-between;
    margin: 9px 8px 0 6px;
}

.footer .push {
    width: 75px;
}
```
